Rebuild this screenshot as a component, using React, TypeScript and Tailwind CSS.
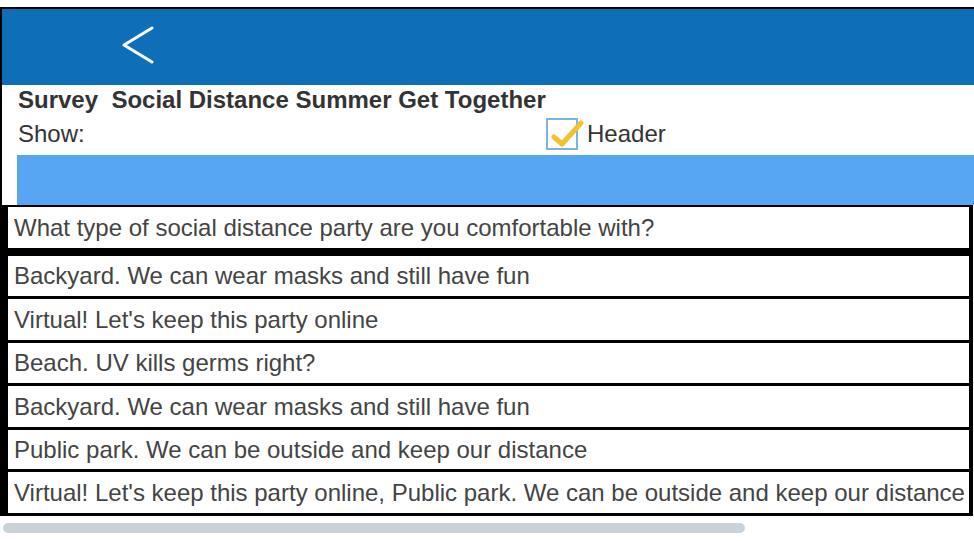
import React from 'react';

const answers = [
  { text: 'Backyard. We can wear masks and still have fun', h: 'h-[43px]' },
  { text: "Virtual! Let's keep this party online", h: 'h-[44px]' },
  { text: 'Beach. UV kills germs right?', h: 'h-[43px]' },
  { text: 'Backyard. We can wear masks and still have fun', h: 'h-[44px]' },
  { text: 'Public park. We can be outside and keep our distance', h: 'h-[42px]' },
  {
    text: "Virtual! Let's keep this party online, Public park. We can be outside and keep our distance",
    h: 'h-[44px]',
  },
];

export default function App() {
  return (
    <div
      className="w-[974px] h-[541px] bg-white overflow-hidden pt-[7px]"
      style={{ fontFamily: '"Liberation Sans", Arial, sans-serif' }}
    >
      <div className="border-t-2 border-l-2 border-black">
        {/* top bar */}
        <div className="h-[76px] bg-[#0e6eb8] flex items-start pt-[17px] pl-[117px]">
          <svg width="36" height="38" viewBox="0 0 36 38" fill="none">
            <polyline
              points="33,2 5,19 33,36"
              stroke="white"
              strokeWidth="3"
              strokeLinecap="round"
              strokeLinejoin="round"
            />
          </svg>
        </div>

        <div className="pl-[16px] text-[24px] text-[#333]">
          <div className="h-[29px] pt-px leading-[28px] font-bold whitespace-pre">
            {'Survey  Social Distance Summer Get Together'}
          </div>
          <div className="h-[40px] flex items-center">
            <span className="w-[528px] leading-[28px]">Show:</span>
            <div className="relative w-[32px] h-[32px] border-2 border-[#7ab4e4] bg-white">
              <svg className="absolute left-[2px] top-0" width="34" height="30" viewBox="0 0 34 30" fill="none">
                <polyline
                  points="4,17 12,24 31,3"
                  stroke="#f2c12e"
                  strokeWidth="5"
                  strokeLinecap="round"
                  strokeLinejoin="round"
                />
              </svg>
            </div>
            <span className="ml-[9px] leading-[28px]">Header</span>
          </div>
        </div>
        <div className="mt-px ml-[15px] h-[50px] bg-[#56a6f4]" />

        {/* answers table */}
        <div className="w-[971px] text-[24px] text-[#444] whitespace-nowrap">
          <div className="h-[51px] border-t-2 border-b-[8px] border-l-[6px] border-r-[4px] border-black bg-white flex items-center pl-[6px]">
            What type of social distance party are you comfortable with?
          </div>
          {answers.map((a, i) => (
            <div
              key={i}
              className={`${a.h} border-b-[3px] border-l-[6px] border-r-[4px] border-black bg-white flex items-center pl-[6px]`}
            >
              {a.text}
            </div>
          ))}
        </div>
      </div>

      {/* horizontal scrollbar */}
      <div className="mt-[7px] ml-[3px] w-[742px] h-[10px] rounded-full bg-[#c9d3d9]" />
    </div>
  );
}
